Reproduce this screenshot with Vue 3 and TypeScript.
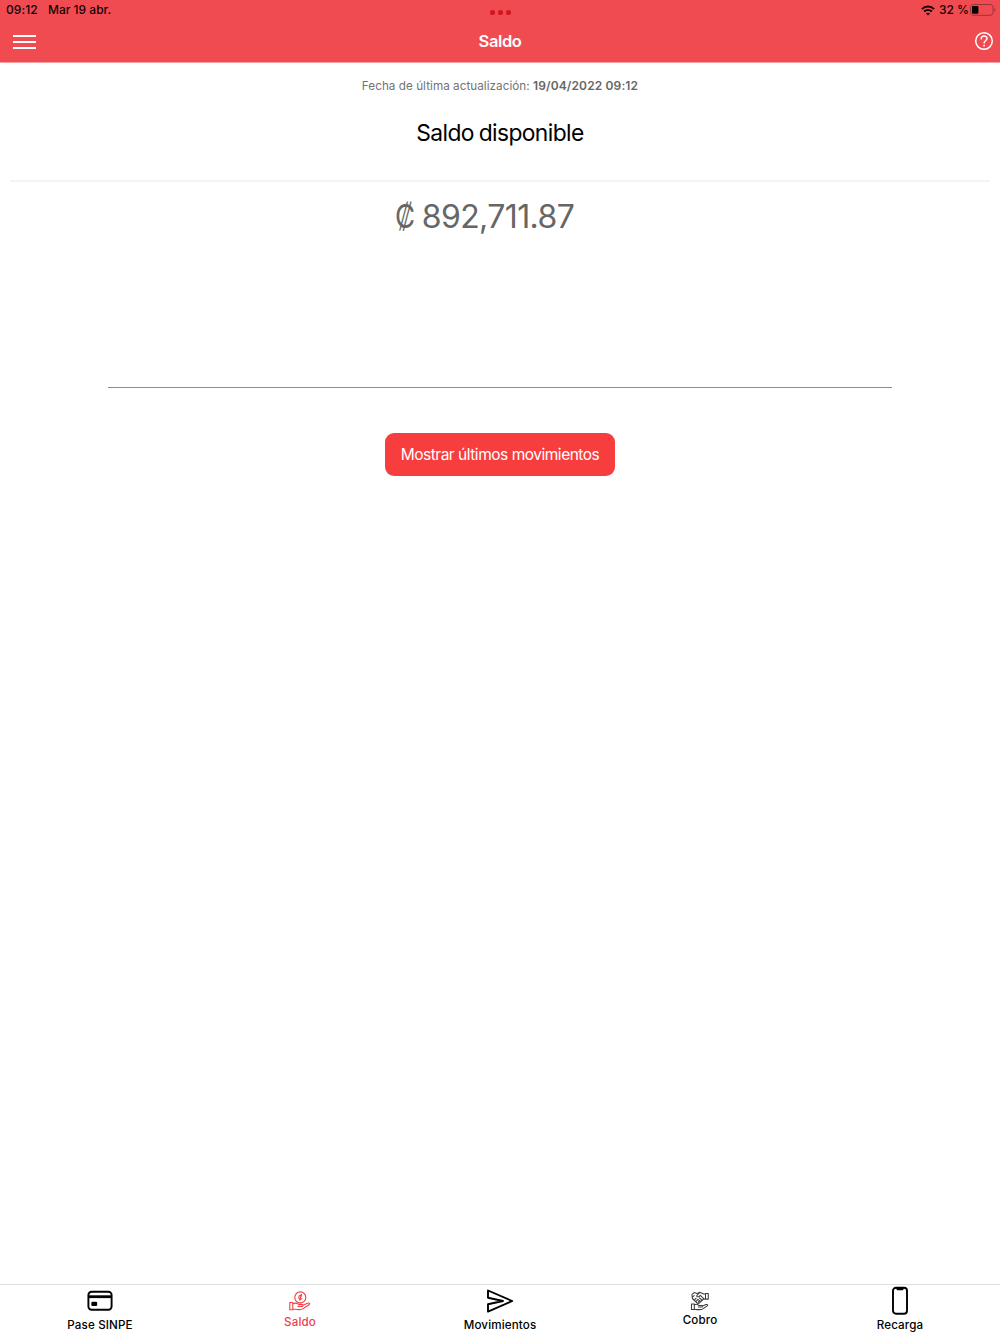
<script setup lang="ts">
import { ref } from 'vue'

interface Tab {
  id: string
  label: string
}

const tabs: Tab[] = [
  { id: 'pase', label: 'Pase SINPE' },
  { id: 'saldo', label: 'Saldo' },
  { id: 'movimientos', label: 'Movimientos' },
  { id: 'cobro', label: 'Cobro' },
  { id: 'recarga', label: 'Recarga' },
]
const active = ref('saldo')
</script>

<template>
  <div class="screen">
    <header class="top">
      <div class="status">
        <span class="time">09:12</span>
        <span class="date">Mar 19 abr.</span>
        <span class="dots"><i /><i /><i /></span>
        <span class="right">
          <svg class="wifi" width="14" height="11" viewBox="0 0 14 11" fill="none" stroke="#170406" stroke-width="1.9">
            <path d="M.9 4.1C4.3.7 9.7.7 13.1 4.1" />
            <path d="M3.1 6.5c2.2-2.1 5.6-2.1 7.8 0" />
            <path d="M7 10.6 4.9 8.5c1.2-1.1 3-1.1 4.2 0z" fill="#170406" stroke="none" />
          </svg>
          <span class="pct">32 %</span>
          <svg class="battery" width="27" height="12" viewBox="0 0 27 12">
            <rect x=".5" y=".5" width="22.6" height="10.8" rx="3" fill="none" stroke="#99343b" />
            <rect x="2" y="2" width="6.4" height="7.8" rx="1.2" fill="#080203" />
            <path d="M24.4 4.1c1.6.5 1.6 3.2 0 3.7z" fill="#99343b" />
          </svg>
        </span>
      </div>
      <div class="nav">
        <button class="menu" aria-label="Menú"><i /><i /><i /></button>
        <h1>Saldo</h1>
        <button class="help" aria-label="Ayuda">
          <svg width="20" height="20" viewBox="0 0 20 20" fill="none" stroke="#fff" stroke-width="1.5">
            <circle cx="10" cy="10" r="8.3" />
            <path d="M7.2 7.9C7.2 4 13 4.1 13 7.5c0 2.2-2.9 2.3-2.9 4.5" stroke-width="1.4" stroke-linecap="round" />
            <circle cx="10.1" cy="14.6" r=".95" fill="#fff" stroke="none" />
          </svg>
        </button>
      </div>
    </header>

    <main>
      <p class="updated">Fecha de última actualización: <b>19/04/2022 09:12</b></p>
      <h2>Saldo disponible</h2>
      <div class="amount"><span class="sign">₡</span><span>892,711.87</span></div>
      <hr />
      <button class="action"><span>Mostrar últimos movimientos</span></button>
    </main>

    <nav class="tabs">
      <button v-for="tab in tabs" :key="tab.id" :class="['tab', tab.id, { active: active === tab.id }]" @click="active = tab.id">
        <svg v-if="tab.id === 'pase'" width="26" height="22" viewBox="0 0 26 22">
          <rect x="1.4" y="1.8" width="23.2" height="17.9" rx="3.2" fill="none" stroke="#000" stroke-width="1.9" />
          <path d="M1.4 5.3h23.2v2.8H1.4z" />
          <rect x="4.3" y="11.8" width="5.9" height="4.2" rx="1.2" />
        </svg>
        <svg v-else-if="tab.id === 'saldo'" width="22" height="20" viewBox="0 0 22 20" fill="none" stroke="#f04148" stroke-width="1.1" stroke-linejoin="round" stroke-linecap="round">
          <circle cx="11.3" cy="6.4" r="5.5" />
          <path d="M12.9 5c-1.2-1.1-3.1-.6-3.1 1.4s2 2.4 3.1 1.3M12.3 3.4l-1.4 6" stroke-width="1.1" />
          <path d="M.8 11.5h3v7.2h-3zM3.8 12.7c2.8-1.2 4.2-.6 5.9.7h3c1.8 0 1.7 2 0 2H9M13.8 14.2l4.7-2c1.9-.7 3.1.4 1.5 1.5l-6.3 4.2c-2.3 1.5-6.6.5-9.9.1" />
        </svg>
        <svg v-else-if="tab.id === 'movimientos'" width="28" height="24" viewBox="0 0 28 24" fill="none" stroke="#000" stroke-width="1.9" stroke-linejoin="round">
          <path d="M2 1.5 26.2 12 2 22.6v-7.4L17 12 2 8.8z" />
        </svg>
        <svg v-else-if="tab.id === 'cobro'" width="20" height="20" viewBox="0 0 20 20" fill="none" stroke="#3c3c3c" stroke-width="1.05" stroke-linejoin="round" stroke-linecap="round">
          <path d="M2 3.3 4.2 1.6 7 2.6l2.6-1.4L13.7 3h1.8v5h-2l-4 3.9c-.8.8-2 .5-2.8-.3L2.4 7.5zM15.5 2.4h2.8v5.7h-2.8zM9.7 1.4 6.5 5c1.2 1.4 2.8.6 3.8-.6l4.2 3.9M2.1 6.4l2-1.8M4.7 8.7l1.5-1.5M6.2 10.2l1.6-1.5M8.2 11.2l1.1-1.1M9.4 6.9l3 2.6M7.8 8.3l3 2.3" />
          <path d="M1.5 13h2.8v5.5H1.5zM4.3 13.8c2-.9 3.3-.5 4.5.6h2.8c1.2 0 1.1 1.5 0 1.5H8.4M12.3 15l3.8-1.4c1.7-.4 2.2.7.8 1.5l-4.6 3c-1.7 1-5 .5-8 .2" />
        </svg>
        <svg v-else width="18" height="30" viewBox="0 0 18 30">
          <rect x="2" y="1.7" width="14" height="26" rx="3" fill="none" stroke="#000" stroke-width="1.9" />
          <path d="M4.8 1h8.4l-.8 2.6c-.2.6-.4.7-1 .7H6.6c-.6 0-.8-.1-1-.7z" />
        </svg>
        <span>{{ tab.label }}</span>
      </button>
    </nav>
  </div>
</template>

<style>
body { margin: 0; background: #fff; }
</style>

<style scoped>
.screen { width: 1000px; height: 1334px; display: flex; flex-direction: column; overflow: hidden; background: #fff; color: #000; font-family: Inter, "Liberation Sans", sans-serif; white-space: nowrap; }
button { border: 0; padding: 0; margin: 0; background: none; color: inherit; font-family: inherit; display: flex; }
.top { height: 63px; box-sizing: border-box; flex: none; background: #f14b52; border-bottom: 1px solid #f8a0a4; }
.status { height: 20px; display: flex; align-items: center; padding: 0 6px; font-size: 12px; line-height: 20px; font-weight: 500; color: #120304; letter-spacing: .1px; }
.time { width: 42px; }
.date { width: 442px; letter-spacing: 0; }
.dots { display: flex; gap: 3px; padding-top: 5px; }
.dots i { width: 5px; height: 5px; border-radius: 50%; background: #d3141f; }
.right { margin-left: auto; display: flex; align-items: center; margin-right: -3px; }
.pct { width: 31px; margin-left: 4px; letter-spacing: 0; }
.nav { height: 42px; display: flex; align-items: center; justify-content: space-between; padding: 0 6px 0 13px; }
.menu { width: 32px; padding-top: 2px; flex-direction: column; gap: 4px; }
.menu i { width: 23px; height: 2px; background: #fff; }
h1 { margin: 0; font-size: 16.5px; font-weight: 600; color: #fff; letter-spacing: -.4px; line-height: 20px; }
.help { width: 39px; justify-content: flex-end; }
main { flex: 1; display: flex; flex-direction: column; align-items: center; }
.updated { margin: 15px 0 0; font-size: 11.7px; line-height: 16px; color: #737373; letter-spacing: 0.04px; }
.updated b { color: #666; font-weight: 600; font-size: 12px; letter-spacing: .13px; }
h2 { align-self: stretch; margin: 23px 10px 0; padding-bottom: 31px; height: 32px; line-height: 32px; text-align: center; font-size: 22.8px; font-weight: 400; letter-spacing: -.6px; word-spacing: -1px; border-bottom: 2px solid #f4f4f4; }
.amount { display: flex; margin-top: 14px; margin-right: 31px; height: 40px; line-height: 41px; font-size: 32px; color: #666; letter-spacing: -.6px; }
.sign { width: 27px; transform: scaleX(.86); transform-origin: 0 50%; }
hr { width: 784px; height: 1px; border: 0; background: #8d8d8d; margin: 151px 0 0; }
.action { margin-top: 45px; width: 230px; height: 43px; border-radius: 9px; background: #f73d3e; color: #fff; font-size: 15.5px; align-items: center; justify-content: center; letter-spacing: -.48px; }
.tabs { height: 50px; box-sizing: border-box; border-top: 1px solid #dedede; display: flex; flex: none; }
.tab { flex: 1; flex-direction: column; align-items: center; font-size: 11.6px; font-weight: 500; line-height: 16px; letter-spacing: .15px; }
.tab svg { flex: none; }
.tab.active { color: #f04148; }
.pase svg { margin-top: 5px; }
.pase span { margin-top: 5px; }
.saldo svg { margin-top: 6px; }
.saldo span { margin-top: 3px; }
.movimientos svg { margin-top: 4px; }
.movimientos span { margin-top: 4px; }
.cobro svg { margin-top: 6px; }
.cobro span { margin-top: 1px; }
.recarga svg { margin-top: 1px; }
.recarga span { margin-top: 1px; }
</style>
